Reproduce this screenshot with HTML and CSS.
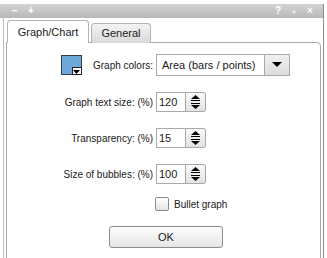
FILE: index.html
```html
<!DOCTYPE html>
<html>

<head>
	<title>Graph options</title>
	<link rel="stylesheet" href="styles.css">
</head>

<body>
	<div class="dialog">
		<div class="titlebar">
			<span class="tb-btn">&minus;</span>
			<span class="tb-btn">+</span>
			<span class="tb-spacer"></span>
			<span class="tb-btn">?</span>
			<span class="tb-btn tb-small">&#9650;</span>
			<span class="tb-btn">&times;</span>
		</div>
		<div class="frame">
			<div class="tabs">
				<div class="tab active">Graph/Chart</div>
				<div class="tab">General</div>
			</div>
			<div class="panel">
				<div class="row row-first">
					<div class="label">
						<span class="swatch">
							<span class="swatch-drop">
								<svg width="7" height="5" viewBox="0 0 7 5"><polygon points="0,1 7,1 3.5,5" fill="#000" /></svg>
							</span>
						</span>
						<span class="label-text">Graph colors:</span>
					</div>
					<div class="select">
						<span class="select-text">Area (bars / points)</span>
						<span class="select-arrow">
							<svg width="10" height="6" viewBox="0 0 10 6"><polygon points="0,0 10,0 5,5" fill="#000" /></svg>
						</span>
					</div>
				</div>

				<div class="row">
					<div class="label"><span class="label-text">Graph text size: (%)</span></div>
					<div class="spin">
						<span class="spin-value">120</span>
						<span class="spin-btns">
							<span class="spin-up"><svg width="9" height="6" viewBox="0 0 9 6"><polygon points="0,4 9,4 4.5,0" fill="#000" /><rect x="0" y="5" width="9" height="1" fill="#000" /></svg></span>
							<span class="spin-down"><svg width="9" height="6" viewBox="0 0 9 6"><rect x="0" y="0" width="9" height="1" fill="#000" /><polygon points="0,2 9,2 4.5,6" fill="#000" /></svg></span>
						</span>
					</div>
				</div>

				<div class="row">
					<div class="label"><span class="label-text">Transparency: (%)</span></div>
					<div class="spin">
						<span class="spin-value">15</span>
						<span class="spin-btns">
							<span class="spin-up"><svg width="9" height="6" viewBox="0 0 9 6"><polygon points="0,4 9,4 4.5,0" fill="#000" /><rect x="0" y="5" width="9" height="1" fill="#000" /></svg></span>
							<span class="spin-down"><svg width="9" height="6" viewBox="0 0 9 6"><rect x="0" y="0" width="9" height="1" fill="#000" /><polygon points="0,2 9,2 4.5,6" fill="#000" /></svg></span>
						</span>
					</div>
				</div>

				<div class="row">
					<div class="label"><span class="label-text">Size of bubbles: (%)</span></div>
					<div class="spin">
						<span class="spin-value">100</span>
						<span class="spin-btns">
							<span class="spin-up"><svg width="9" height="6" viewBox="0 0 9 6"><polygon points="0,4 9,4 4.5,0" fill="#000" /><rect x="0" y="5" width="9" height="1" fill="#000" /></svg></span>
							<span class="spin-down"><svg width="9" height="6" viewBox="0 0 9 6"><rect x="0" y="0" width="9" height="1" fill="#000" /><polygon points="0,2 9,2 4.5,6" fill="#000" /></svg></span>
						</span>
					</div>
				</div>

				<div class="check-row">
					<span class="checkbox"></span>
					<span class="check-label">Bullet graph</span>
				</div>

				<div class="btn-row">
					<div class="btn">OK</div>
				</div>
			</div>
		</div>
	</div>
</body>

</html>
```

FILE: styles.css
```css
:root {
	--border: #a9a9a9;
	--text: #1a1a1a;
}

body {
	margin: 0;
	padding: 0;
	background-color: #fff;
	color: var(--text);
	font-family: 'Liberation Sans', Arial, sans-serif;
	font-size: 10px;
}

.dialog {
	margin-top: 4px;
	width: 323px;
	height: 254px;
	border-right: 1px solid #8e8e8e;
	display: flex;
	flex-direction: column;
}

.titlebar {
	height: 14px;
	background: linear-gradient(#d4d4d4, #b8b8b8);
	display: flex;
	align-items: center;
	padding: 0 6px 0 8px;
	color: #fff;
	font-weight: bold;
	font-size: 10px;
}

.tb-btn {
	width: 14px;
	text-align: center;
	line-height: 14px;
}

.tb-btn + .tb-btn {
	margin-left: 2px;
}

.tb-small {
	font-size: 6px;
	color: #eee;
}

.tb-spacer {
	flex: 1;
}

.frame {
	flex: 1;
	margin-left: 3px;
	border-left: 1px solid #b7bec6;
	padding: 2px 2px 0 2px;
	display: flex;
	flex-direction: column;
}

.tabs {
	display: flex;
	align-items: flex-end;
	margin-bottom: -1px;
	position: relative;
	z-index: 1;
}

.tab {
	height: 19px;
	width: 58px;
	margin-left: 2px;
	border: 1px solid #b3b3b3;
	border-bottom: none;
	border-radius: 4px 4px 0 0;
	background: linear-gradient(#f4f4f4, #d9d9d9);
	font-size: 11px;
	text-align: center;
	line-height: 19px;
}

.tab.active {
	height: 22px;
	width: 80px;
	margin-left: 1px;
	background: #fff;
	line-height: 22px;
}

.panel {
	height: 211px;
	border: 1px solid var(--border);
	border-radius: 0 4px 0 0;
	background-color: #fff;
	padding-top: 11px;
}

.row {
	display: flex;
	align-items: center;
	height: 20px;
	margin-top: 16px;
}

.row-first {
	height: 22px;
	margin-top: 0;
}

.label {
	width: 146px;
	margin-right: 3px;
	display: flex;
	align-items: center;
	justify-content: flex-end;
}

.label-text {
	white-space: nowrap;
}

.swatch {
	width: 19px;
	height: 18px;
	border: 1px solid #3c3c3c;
	background-color: #6ea8d8;
	margin-right: 11px;
	position: relative;
}

.swatch-drop {
	position: absolute;
	right: -1px;
	bottom: -1px;
	width: 8px;
	height: 6px;
	background: #fff;
	border: 1px solid #222;
	display: flex;
	align-items: center;
	justify-content: center;
}

.select {
	width: 132px;
	height: 20px;
	border: 1px solid var(--border);
	display: flex;
	align-items: center;
	font-size: 11px;
}

.select-text {
	flex: 1;
	padding-left: 5px;
	white-space: nowrap;
}

.select-arrow {
	width: 24px;
	height: 20px;
	border-left: 1px solid var(--border);
	background: linear-gradient(#f0f0f0, #dcdcdc);
	display: flex;
	align-items: center;
	justify-content: center;
}

.spin {
	width: 50px;
	height: 20px;
	display: flex;
}

.spin-value {
	width: 27px;
	border: 1px solid var(--border);
	font-size: 11px;
	line-height: 18px;
	padding-left: 2px;
}

.spin-btns {
	width: 19px;
	border: 1px solid var(--border);
	border-left: none;
	border-radius: 0 3px 3px 0;
	background: linear-gradient(#fafafa, #e2e2e2);
	display: flex;
	flex-direction: column;
}

.spin-up,
.spin-down {
	flex: 1;
	display: flex;
	justify-content: center;
}

.spin-up {
	align-items: flex-end;
	padding-bottom: 1px;
}

.spin-down {
	align-items: flex-start;
	padding-top: 1px;
}

.check-row {
	display: flex;
	align-items: center;
	margin-top: 13px;
	padding-left: 148px;
	height: 14px;
}

.checkbox {
	width: 12px;
	height: 12px;
	border: 1px solid #8a8a8a;
	border-radius: 2px;
	background: linear-gradient(#fff, #e4e4e4);
	margin-right: 5px;
}

.btn-row {
	margin-top: 15px;
	padding-left: 102px;
}

.btn {
	width: 112px;
	height: 20px;
	border: 1px solid #8c8c8c;
	border-radius: 3px;
	background: linear-gradient(#fdfdfd, #e6e6e6);
	text-align: center;
	line-height: 20px;
	font-size: 11px;
}
```
